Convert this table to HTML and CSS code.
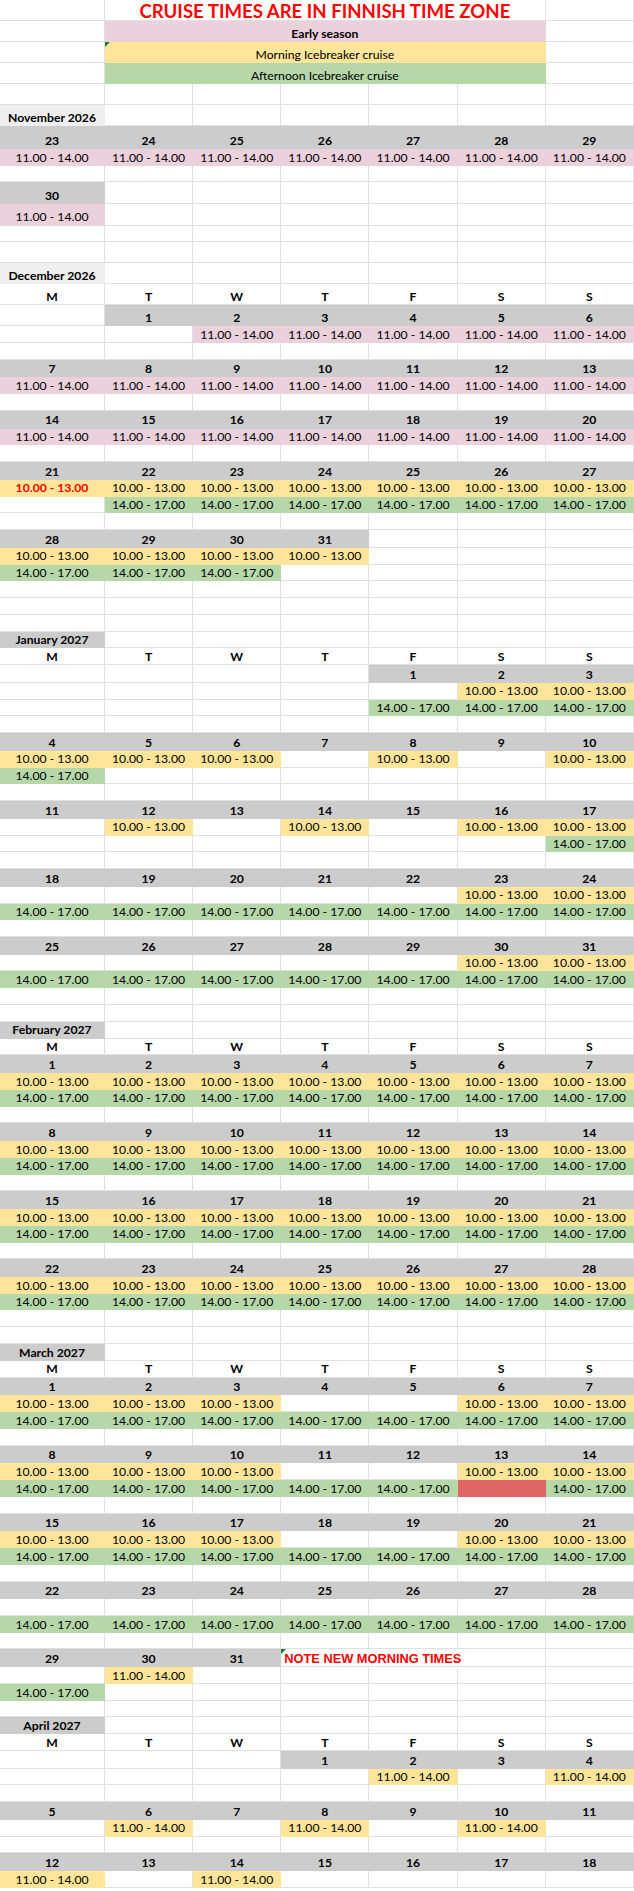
FILE: index.html
```html
<!DOCTYPE html>
<html lang="en">
<head>
<meta charset="utf-8">
<title>Cruise times</title>
<link rel="stylesheet" href="styles.css">
</head>
<body>
<div class="sheet">
<div class="row hT"><div class="c"></div><div class="c s5 title">CRUISE TIMES ARE IN FINNISH TIME ZONE</div><div class="c"></div></div>
<div class="row hT"><div class="c"></div><div class="c s5 p b">Early season</div><div class="c"></div></div>
<div class="row hT"><div class="c"></div><div class="c s5 y tri">Morning Icebreaker cruise</div><div class="c"></div></div>
<div class="row hT"><div class="c"></div><div class="c s5 n">Afternoon Icebreaker cruise</div><div class="c"></div></div>
<div class="row hT"><div class="c"></div><div class="c"></div><div class="c"></div><div class="c"></div><div class="c"></div><div class="c"></div><div class="c"></div></div>

<div class="row hT"><div class="c lg b">November 2026</div><div class="c"></div><div class="c"></div><div class="c"></div><div class="c"></div><div class="c"></div><div class="c"></div></div>
<div class="row hN"><div class="c g">23</div><div class="c g">24</div><div class="c g">25</div><div class="c g">26</div><div class="c g">27</div><div class="c g">28</div><div class="c g">29</div></div>
<div class="row hs"><div class="c p">11.00 - 14.00</div><div class="c p">11.00 - 14.00</div><div class="c p">11.00 - 14.00</div><div class="c p">11.00 - 14.00</div><div class="c p">11.00 - 14.00</div><div class="c p">11.00 - 14.00</div><div class="c p">11.00 - 14.00</div></div>
<div class="row hs"><div class="c"></div><div class="c"></div><div class="c"></div><div class="c"></div><div class="c"></div><div class="c"></div><div class="c"></div></div>
<div class="row hT2"><div class="c g">30</div><div class="c"></div><div class="c"></div><div class="c"></div><div class="c"></div><div class="c"></div><div class="c"></div></div>
<div class="row hT2"><div class="c p">11.00 - 14.00</div><div class="c"></div><div class="c"></div><div class="c"></div><div class="c"></div><div class="c"></div><div class="c"></div></div>
<div class="row hs"><div class="c"></div><div class="c"></div><div class="c"></div><div class="c"></div><div class="c"></div><div class="c"></div><div class="c"></div></div>
<div class="row hT"><div class="c"></div><div class="c"></div><div class="c"></div><div class="c"></div><div class="c"></div><div class="c"></div><div class="c"></div></div>

<div class="row hT"><div class="c lg b">December 2026</div><div class="c"></div><div class="c"></div><div class="c"></div><div class="c"></div><div class="c"></div><div class="c"></div></div>
<div class="row hT"><div class="c b">M</div><div class="c b">T</div><div class="c b">W</div><div class="c b">T</div><div class="c b">F</div><div class="c b">S</div><div class="c b">S</div></div>
<div class="row hT"><div class="c"></div><div class="c g">1</div><div class="c g">2</div><div class="c g">3</div><div class="c g">4</div><div class="c g">5</div><div class="c g">6</div></div>
<div class="row hs"><div class="c"></div><div class="c"></div><div class="c p">11.00 - 14.00</div><div class="c p">11.00 - 14.00</div><div class="c p">11.00 - 14.00</div><div class="c p">11.00 - 14.00</div><div class="c p">11.00 - 14.00</div></div>
<div class="row hs"><div class="c"></div><div class="c"></div><div class="c"></div><div class="c"></div><div class="c"></div><div class="c"></div><div class="c"></div></div>
<div class="row hd"><div class="c g">7</div><div class="c g">8</div><div class="c g">9</div><div class="c g">10</div><div class="c g">11</div><div class="c g">12</div><div class="c g">13</div></div>
<div class="row hn"><div class="c p">11.00 - 14.00</div><div class="c p">11.00 - 14.00</div><div class="c p">11.00 - 14.00</div><div class="c p">11.00 - 14.00</div><div class="c p">11.00 - 14.00</div><div class="c p">11.00 - 14.00</div><div class="c p">11.00 - 14.00</div></div>
<div class="row hn"><div class="c"></div><div class="c"></div><div class="c"></div><div class="c"></div><div class="c"></div><div class="c"></div><div class="c"></div></div>
<div class="row hd"><div class="c g">14</div><div class="c g">15</div><div class="c g">16</div><div class="c g">17</div><div class="c g">18</div><div class="c g">19</div><div class="c g">20</div></div>
<div class="row hn"><div class="c p">11.00 - 14.00</div><div class="c p">11.00 - 14.00</div><div class="c p">11.00 - 14.00</div><div class="c p">11.00 - 14.00</div><div class="c p">11.00 - 14.00</div><div class="c p">11.00 - 14.00</div><div class="c p">11.00 - 14.00</div></div>
<div class="row hn"><div class="c"></div><div class="c"></div><div class="c"></div><div class="c"></div><div class="c"></div><div class="c"></div><div class="c"></div></div>
<div class="row hd"><div class="c g">21</div><div class="c g">22</div><div class="c g">23</div><div class="c g">24</div><div class="c g">25</div><div class="c g">26</div><div class="c g">27</div></div>
<div class="row hn"><div class="c y red">10.00 - 13.00</div><div class="c y">10.00 - 13.00</div><div class="c y">10.00 - 13.00</div><div class="c y">10.00 - 13.00</div><div class="c y">10.00 - 13.00</div><div class="c y">10.00 - 13.00</div><div class="c y">10.00 - 13.00</div></div>
<div class="row hn"><div class="c"></div><div class="c n">14.00 - 17.00</div><div class="c n">14.00 - 17.00</div><div class="c n">14.00 - 17.00</div><div class="c n">14.00 - 17.00</div><div class="c n">14.00 - 17.00</div><div class="c n">14.00 - 17.00</div></div>
<div class="row hn"><div class="c"></div><div class="c"></div><div class="c"></div><div class="c"></div><div class="c"></div><div class="c"></div><div class="c"></div></div>
<div class="row hd"><div class="c g">28</div><div class="c g">29</div><div class="c g">30</div><div class="c g">31</div><div class="c"></div><div class="c"></div><div class="c"></div></div>
<div class="row hn"><div class="c y">10.00 - 13.00</div><div class="c y">10.00 - 13.00</div><div class="c y">10.00 - 13.00</div><div class="c y">10.00 - 13.00</div><div class="c"></div><div class="c"></div><div class="c"></div></div>
<div class="row hn"><div class="c n">14.00 - 17.00</div><div class="c n">14.00 - 17.00</div><div class="c n">14.00 - 17.00</div><div class="c"></div><div class="c"></div><div class="c"></div><div class="c"></div></div>
<div class="row hn"><div class="c"></div><div class="c"></div><div class="c"></div><div class="c"></div><div class="c"></div><div class="c"></div><div class="c"></div></div>
<div class="row hn"><div class="c"></div><div class="c"></div><div class="c"></div><div class="c"></div><div class="c"></div><div class="c"></div><div class="c"></div></div>
<div class="row hn"><div class="c"></div><div class="c"></div><div class="c"></div><div class="c"></div><div class="c"></div><div class="c"></div><div class="c"></div></div>

<div class="row hn"><div class="c g">January 2027</div><div class="c"></div><div class="c"></div><div class="c"></div><div class="c"></div><div class="c"></div><div class="c"></div></div>
<div class="row hn"><div class="c b">M</div><div class="c b">T</div><div class="c b">W</div><div class="c b">T</div><div class="c b">F</div><div class="c b">S</div><div class="c b">S</div></div>
<div class="row hd"><div class="c"></div><div class="c"></div><div class="c"></div><div class="c"></div><div class="c g">1</div><div class="c g">2</div><div class="c g">3</div></div>
<div class="row hn"><div class="c"></div><div class="c"></div><div class="c"></div><div class="c"></div><div class="c"></div><div class="c y">10.00 - 13.00</div><div class="c y">10.00 - 13.00</div></div>
<div class="row hn"><div class="c"></div><div class="c"></div><div class="c"></div><div class="c"></div><div class="c n">14.00 - 17.00</div><div class="c n">14.00 - 17.00</div><div class="c n">14.00 - 17.00</div></div>
<div class="row hn"><div class="c"></div><div class="c"></div><div class="c"></div><div class="c"></div><div class="c"></div><div class="c"></div><div class="c"></div></div>
<div class="row hd"><div class="c g">4</div><div class="c g">5</div><div class="c g">6</div><div class="c g">7</div><div class="c g">8</div><div class="c g">9</div><div class="c g">10</div></div>
<div class="row hn"><div class="c y">10.00 - 13.00</div><div class="c y">10.00 - 13.00</div><div class="c y">10.00 - 13.00</div><div class="c"></div><div class="c y">10.00 - 13.00</div><div class="c"></div><div class="c y">10.00 - 13.00</div></div>
<div class="row hn"><div class="c n">14.00 - 17.00</div><div class="c"></div><div class="c"></div><div class="c"></div><div class="c"></div><div class="c"></div><div class="c"></div></div>
<div class="row hn"><div class="c"></div><div class="c"></div><div class="c"></div><div class="c"></div><div class="c"></div><div class="c"></div><div class="c"></div></div>
<div class="row hd"><div class="c g">11</div><div class="c g">12</div><div class="c g">13</div><div class="c g">14</div><div class="c g">15</div><div class="c g">16</div><div class="c g">17</div></div>
<div class="row hn"><div class="c"></div><div class="c y">10.00 - 13.00</div><div class="c"></div><div class="c y">10.00 - 13.00</div><div class="c"></div><div class="c y">10.00 - 13.00</div><div class="c y">10.00 - 13.00</div></div>
<div class="row hn"><div class="c"></div><div class="c"></div><div class="c"></div><div class="c"></div><div class="c"></div><div class="c"></div><div class="c n">14.00 - 17.00</div></div>
<div class="row hn"><div class="c"></div><div class="c"></div><div class="c"></div><div class="c"></div><div class="c"></div><div class="c"></div><div class="c"></div></div>
<div class="row hd"><div class="c g">18</div><div class="c g">19</div><div class="c g">20</div><div class="c g">21</div><div class="c g">22</div><div class="c g">23</div><div class="c g">24</div></div>
<div class="row hn"><div class="c"></div><div class="c"></div><div class="c"></div><div class="c"></div><div class="c"></div><div class="c y">10.00 - 13.00</div><div class="c y">10.00 - 13.00</div></div>
<div class="row hn"><div class="c n">14.00 - 17.00</div><div class="c n">14.00 - 17.00</div><div class="c n">14.00 - 17.00</div><div class="c n">14.00 - 17.00</div><div class="c n">14.00 - 17.00</div><div class="c n">14.00 - 17.00</div><div class="c n">14.00 - 17.00</div></div>
<div class="row hn"><div class="c"></div><div class="c"></div><div class="c"></div><div class="c"></div><div class="c"></div><div class="c"></div><div class="c"></div></div>
<div class="row hd"><div class="c g">25</div><div class="c g">26</div><div class="c g">27</div><div class="c g">28</div><div class="c g">29</div><div class="c g">30</div><div class="c g">31</div></div>
<div class="row hn"><div class="c"></div><div class="c"></div><div class="c"></div><div class="c"></div><div class="c"></div><div class="c y">10.00 - 13.00</div><div class="c y">10.00 - 13.00</div></div>
<div class="row hn"><div class="c n">14.00 - 17.00</div><div class="c n">14.00 - 17.00</div><div class="c n">14.00 - 17.00</div><div class="c n">14.00 - 17.00</div><div class="c n">14.00 - 17.00</div><div class="c n">14.00 - 17.00</div><div class="c n">14.00 - 17.00</div></div>
<div class="row hn"><div class="c"></div><div class="c"></div><div class="c"></div><div class="c"></div><div class="c"></div><div class="c"></div><div class="c"></div></div>
<div class="row hn"><div class="c"></div><div class="c"></div><div class="c"></div><div class="c"></div><div class="c"></div><div class="c"></div><div class="c"></div></div>

<div class="row hn"><div class="c g">February 2027</div><div class="c"></div><div class="c"></div><div class="c"></div><div class="c"></div><div class="c"></div><div class="c"></div></div>
<div class="row hn"><div class="c b">M</div><div class="c b">T</div><div class="c b">W</div><div class="c b">T</div><div class="c b">F</div><div class="c b">S</div><div class="c b">S</div></div>
<div class="row hd"><div class="c g">1</div><div class="c g">2</div><div class="c g">3</div><div class="c g">4</div><div class="c g">5</div><div class="c g">6</div><div class="c g">7</div></div>
<div class="row hn"><div class="c y">10.00 - 13.00</div><div class="c y">10.00 - 13.00</div><div class="c y">10.00 - 13.00</div><div class="c y">10.00 - 13.00</div><div class="c y">10.00 - 13.00</div><div class="c y">10.00 - 13.00</div><div class="c y">10.00 - 13.00</div></div>
<div class="row hn"><div class="c n">14.00 - 17.00</div><div class="c n">14.00 - 17.00</div><div class="c n">14.00 - 17.00</div><div class="c n">14.00 - 17.00</div><div class="c n">14.00 - 17.00</div><div class="c n">14.00 - 17.00</div><div class="c n">14.00 - 17.00</div></div>
<div class="row hn"><div class="c"></div><div class="c"></div><div class="c"></div><div class="c"></div><div class="c"></div><div class="c"></div><div class="c"></div></div>
<div class="row hd"><div class="c g">8</div><div class="c g">9</div><div class="c g">10</div><div class="c g">11</div><div class="c g">12</div><div class="c g">13</div><div class="c g">14</div></div>
<div class="row hn"><div class="c y">10.00 - 13.00</div><div class="c y">10.00 - 13.00</div><div class="c y">10.00 - 13.00</div><div class="c y">10.00 - 13.00</div><div class="c y">10.00 - 13.00</div><div class="c y">10.00 - 13.00</div><div class="c y">10.00 - 13.00</div></div>
<div class="row hn"><div class="c n">14.00 - 17.00</div><div class="c n">14.00 - 17.00</div><div class="c n">14.00 - 17.00</div><div class="c n">14.00 - 17.00</div><div class="c n">14.00 - 17.00</div><div class="c n">14.00 - 17.00</div><div class="c n">14.00 - 17.00</div></div>
<div class="row hn"><div class="c"></div><div class="c"></div><div class="c"></div><div class="c"></div><div class="c"></div><div class="c"></div><div class="c"></div></div>
<div class="row hd"><div class="c g">15</div><div class="c g">16</div><div class="c g">17</div><div class="c g">18</div><div class="c g">19</div><div class="c g">20</div><div class="c g">21</div></div>
<div class="row hn"><div class="c y">10.00 - 13.00</div><div class="c y">10.00 - 13.00</div><div class="c y">10.00 - 13.00</div><div class="c y">10.00 - 13.00</div><div class="c y">10.00 - 13.00</div><div class="c y">10.00 - 13.00</div><div class="c y">10.00 - 13.00</div></div>
<div class="row hn"><div class="c n">14.00 - 17.00</div><div class="c n">14.00 - 17.00</div><div class="c n">14.00 - 17.00</div><div class="c n">14.00 - 17.00</div><div class="c n">14.00 - 17.00</div><div class="c n">14.00 - 17.00</div><div class="c n">14.00 - 17.00</div></div>
<div class="row hn"><div class="c"></div><div class="c"></div><div class="c"></div><div class="c"></div><div class="c"></div><div class="c"></div><div class="c"></div></div>
<div class="row hd"><div class="c g">22</div><div class="c g">23</div><div class="c g">24</div><div class="c g">25</div><div class="c g">26</div><div class="c g">27</div><div class="c g">28</div></div>
<div class="row hn"><div class="c y">10.00 - 13.00</div><div class="c y">10.00 - 13.00</div><div class="c y">10.00 - 13.00</div><div class="c y">10.00 - 13.00</div><div class="c y">10.00 - 13.00</div><div class="c y">10.00 - 13.00</div><div class="c y">10.00 - 13.00</div></div>
<div class="row hn"><div class="c n">14.00 - 17.00</div><div class="c n">14.00 - 17.00</div><div class="c n">14.00 - 17.00</div><div class="c n">14.00 - 17.00</div><div class="c n">14.00 - 17.00</div><div class="c n">14.00 - 17.00</div><div class="c n">14.00 - 17.00</div></div>
<div class="row hn"><div class="c"></div><div class="c"></div><div class="c"></div><div class="c"></div><div class="c"></div><div class="c"></div><div class="c"></div></div>
<div class="row hn"><div class="c"></div><div class="c"></div><div class="c"></div><div class="c"></div><div class="c"></div><div class="c"></div><div class="c"></div></div>

<div class="row hn"><div class="c g">March 2027</div><div class="c"></div><div class="c"></div><div class="c"></div><div class="c"></div><div class="c"></div><div class="c"></div></div>
<div class="row hn"><div class="c b">M</div><div class="c b">T</div><div class="c b">W</div><div class="c b">T</div><div class="c b">F</div><div class="c b">S</div><div class="c b">S</div></div>
<div class="row hd"><div class="c g">1</div><div class="c g">2</div><div class="c g">3</div><div class="c g">4</div><div class="c g">5</div><div class="c g">6</div><div class="c g">7</div></div>
<div class="row hn"><div class="c y">10.00 - 13.00</div><div class="c y">10.00 - 13.00</div><div class="c y">10.00 - 13.00</div><div class="c"></div><div class="c"></div><div class="c y">10.00 - 13.00</div><div class="c y">10.00 - 13.00</div></div>
<div class="row hn"><div class="c n">14.00 - 17.00</div><div class="c n">14.00 - 17.00</div><div class="c n">14.00 - 17.00</div><div class="c n">14.00 - 17.00</div><div class="c n">14.00 - 17.00</div><div class="c n">14.00 - 17.00</div><div class="c n">14.00 - 17.00</div></div>
<div class="row hn"><div class="c"></div><div class="c"></div><div class="c"></div><div class="c"></div><div class="c"></div><div class="c"></div><div class="c"></div></div>
<div class="row hd"><div class="c g">8</div><div class="c g">9</div><div class="c g">10</div><div class="c g">11</div><div class="c g">12</div><div class="c g">13</div><div class="c g">14</div></div>
<div class="row hn"><div class="c y">10.00 - 13.00</div><div class="c y">10.00 - 13.00</div><div class="c y">10.00 - 13.00</div><div class="c"></div><div class="c"></div><div class="c y">10.00 - 13.00</div><div class="c y">10.00 - 13.00</div></div>
<div class="row hn"><div class="c n">14.00 - 17.00</div><div class="c n">14.00 - 17.00</div><div class="c n">14.00 - 17.00</div><div class="c n">14.00 - 17.00</div><div class="c n">14.00 - 17.00</div><div class="c r"></div><div class="c n">14.00 - 17.00</div></div>
<div class="row hn"><div class="c"></div><div class="c"></div><div class="c"></div><div class="c"></div><div class="c"></div><div class="c"></div><div class="c"></div></div>
<div class="row hd"><div class="c g">15</div><div class="c g">16</div><div class="c g">17</div><div class="c g">18</div><div class="c g">19</div><div class="c g">20</div><div class="c g">21</div></div>
<div class="row hn"><div class="c y">10.00 - 13.00</div><div class="c y">10.00 - 13.00</div><div class="c y">10.00 - 13.00</div><div class="c"></div><div class="c"></div><div class="c y">10.00 - 13.00</div><div class="c y">10.00 - 13.00</div></div>
<div class="row hn"><div class="c n">14.00 - 17.00</div><div class="c n">14.00 - 17.00</div><div class="c n">14.00 - 17.00</div><div class="c n">14.00 - 17.00</div><div class="c n">14.00 - 17.00</div><div class="c n">14.00 - 17.00</div><div class="c n">14.00 - 17.00</div></div>
<div class="row hn"><div class="c"></div><div class="c"></div><div class="c"></div><div class="c"></div><div class="c"></div><div class="c"></div><div class="c"></div></div>
<div class="row hd"><div class="c g">22</div><div class="c g">23</div><div class="c g">24</div><div class="c g">25</div><div class="c g">26</div><div class="c g">27</div><div class="c g">28</div></div>
<div class="row hn"><div class="c"></div><div class="c"></div><div class="c"></div><div class="c"></div><div class="c"></div><div class="c"></div><div class="c"></div></div>
<div class="row hn"><div class="c n">14.00 - 17.00</div><div class="c n">14.00 - 17.00</div><div class="c n">14.00 - 17.00</div><div class="c n">14.00 - 17.00</div><div class="c n">14.00 - 17.00</div><div class="c n">14.00 - 17.00</div><div class="c n">14.00 - 17.00</div></div>
<div class="row hn"><div class="c"></div><div class="c"></div><div class="c"></div><div class="c"></div><div class="c"></div><div class="c"></div><div class="c"></div></div>
<div class="row hd"><div class="c g">29</div><div class="c g">30</div><div class="c g">31</div><div class="c s3 note tri">NOTE NEW MORNING TIMES</div><div class="c"></div></div>
<div class="row hn"><div class="c"></div><div class="c y">11.00 - 14.00</div><div class="c"></div><div class="c"></div><div class="c"></div><div class="c"></div><div class="c"></div></div>
<div class="row hn"><div class="c n">14.00 - 17.00</div><div class="c"></div><div class="c"></div><div class="c"></div><div class="c"></div><div class="c"></div><div class="c"></div></div>
<div class="row hn"><div class="c"></div><div class="c"></div><div class="c"></div><div class="c"></div><div class="c"></div><div class="c"></div><div class="c"></div></div>

<div class="row hn"><div class="c g">April 2027</div><div class="c"></div><div class="c"></div><div class="c"></div><div class="c"></div><div class="c"></div><div class="c"></div></div>
<div class="row hn"><div class="c b">M</div><div class="c b">T</div><div class="c b">W</div><div class="c b">T</div><div class="c b">F</div><div class="c b">S</div><div class="c b">S</div></div>
<div class="row hd"><div class="c"></div><div class="c"></div><div class="c"></div><div class="c g">1</div><div class="c g">2</div><div class="c g">3</div><div class="c g">4</div></div>
<div class="row hn"><div class="c"></div><div class="c"></div><div class="c"></div><div class="c"></div><div class="c y">11.00 - 14.00</div><div class="c"></div><div class="c y">11.00 - 14.00</div></div>
<div class="row hn"><div class="c"></div><div class="c"></div><div class="c"></div><div class="c"></div><div class="c"></div><div class="c"></div><div class="c"></div></div>
<div class="row hd"><div class="c g">5</div><div class="c g">6</div><div class="c g">7</div><div class="c g">8</div><div class="c g">9</div><div class="c g">10</div><div class="c g">11</div></div>
<div class="row hn"><div class="c"></div><div class="c y">11.00 - 14.00</div><div class="c"></div><div class="c y">11.00 - 14.00</div><div class="c"></div><div class="c y">11.00 - 14.00</div><div class="c"></div></div>
<div class="row hn"><div class="c"></div><div class="c"></div><div class="c"></div><div class="c"></div><div class="c"></div><div class="c"></div><div class="c"></div></div>
<div class="row hd"><div class="c g">12</div><div class="c g">13</div><div class="c g">14</div><div class="c g">15</div><div class="c g">16</div><div class="c g">17</div><div class="c g">18</div></div>
<div class="row hn"><div class="c y">11.00 - 14.00</div><div class="c"></div><div class="c y">11.00 - 14.00</div><div class="c"></div><div class="c"></div><div class="c"></div><div class="c"></div></div>
</div>
</body>
</html>
```

FILE: styles.css
```css
html, body {
  margin: 0;
  padding: 0;
  background: #ffffff;
}

.sheet {
  width: 634px;
  overflow: hidden;
  font-family: Lato, "Open Sans", sans-serif;
  font-size: 12.2px;
  color: #000000;
}

.row {
  display: grid;
  grid-template-columns: 105px repeat(6, 88.1667px);
}

.hT  { height: 21px; }
.hT2 { height: 21.6px; }
.hN  { height: 23px; }
.hs  { height: 16.7px; }
.hd  { height: 17.7px; }
.hn  { height: 16.78px; }

.c {
  box-sizing: border-box;
  min-width: 0;
  display: flex;
  align-items: flex-end;
  justify-content: center;
  line-height: 12px;
  padding-bottom: 1.2px;
  white-space: nowrap;
  border-right: 1px solid #e0e0e0;
  border-bottom: 1px solid #e0e0e0;
}

.s5 { grid-column: span 5; }
.s3 { grid-column: span 3; }

.b { font-weight: 700; }

.g  { background: #cccccc; border-color: #cccccc; font-weight: 700; }
.lg { background: #efefef; border-color: #efefef; }
.p  { background: #ead1dc; border-color: #ead1dc; }
.y  { background: #ffe599; border-color: #ffe599; }
.n  { background: #b6d7a8; border-color: #b6d7a8; }
.r  { background: #e06666; border-color: #e06666; }

.red {
  color: #ff0000;
  font-weight: 700;
}

.title {
  font-size: 18.6px;
  font-weight: 700;
  color: #ff0000;
  line-height: 18px;
  padding-bottom: 0;
}

.note {
  justify-content: flex-start;
  padding-left: 3px;
  padding-bottom: 1.4px;
  font-family: "Liberation Sans", Arial, sans-serif;
  font-size: 12.8px;
  font-weight: 700;
  color: #ff0000;
}

.tri {
  position: relative;
}

.tri::before {
  content: "";
  position: absolute;
  top: 0;
  left: 0;
  border-top: 5px solid #1e7d32;
  border-right: 5px solid transparent;
}
```
